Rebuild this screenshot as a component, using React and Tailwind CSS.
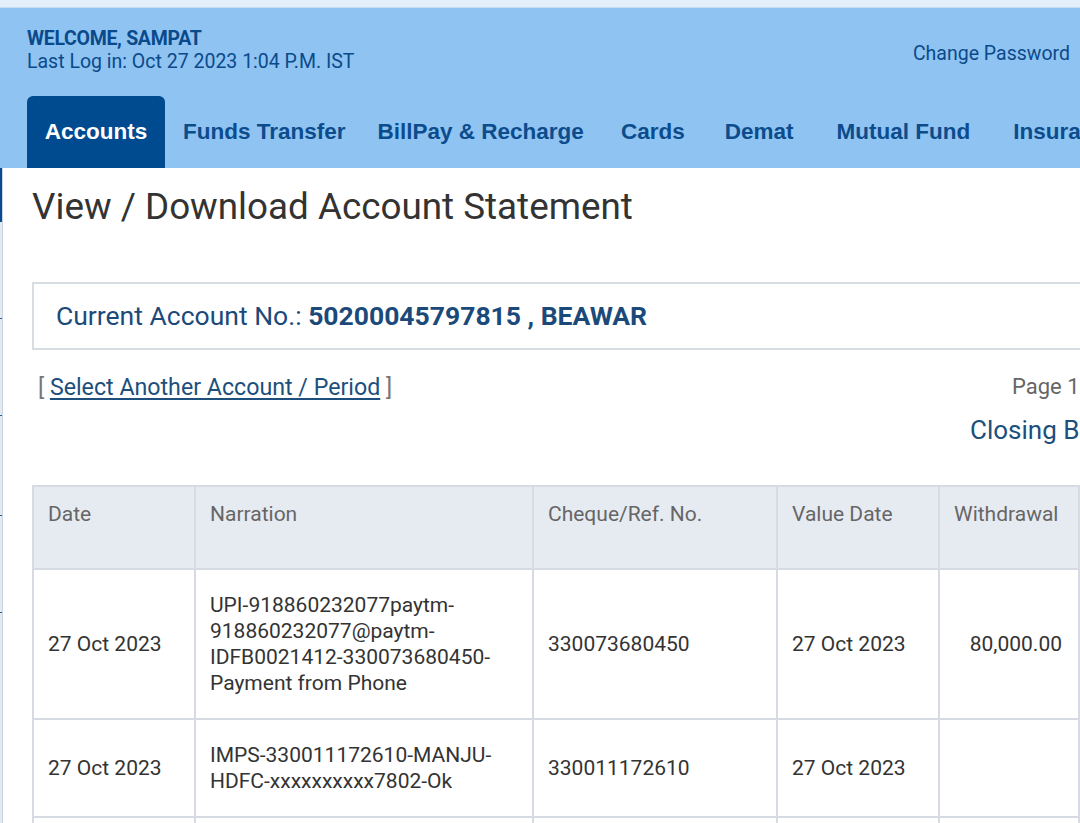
import React from 'react';

const tabs = [
  { label: 'Funds Transfer', gap: 'ml-[18px]' },
  { label: 'BillPay & Recharge', gap: 'ml-[32px]' },
  { label: 'Cards', gap: 'ml-[37px]' },
  { label: 'Demat', gap: 'ml-[40px]' },
  { label: 'Mutual Fund', gap: 'ml-[43px]' },
  { label: 'Insurance', gap: 'ml-[43px]' },
];

const rows = [
  {
    date: '27 Oct 2023',
    narration: 'UPI-918860232077paytm-918860232077@paytm-IDFB0021412-330073680450-Payment from Phone',
    ref: '330073680450',
    valueDate: '27 Oct 2023',
    withdrawal: '80,000.00',
    deposit: '',
  },
  {
    date: '27 Oct 2023',
    narration: 'IMPS-330011172610-MANJU-HDFC-xxxxxxxxxx7802-Ok',
    ref: '330011172610',
    valueDate: '27 Oct 2023',
    withdrawal: '',
    deposit: '50,000.00',
  },
  {
    date: '27 Oct 2023',
    narration: 'IMPS-330011175521-MANJU-HDFC-xxxxxxxxxx7802-Ok',
    ref: '330011175521',
    valueDate: '27 Oct 2023',
    withdrawal: '',
    deposit: '30,000.00',
  },
];

function LeftRail() {
  return (
    <div className="w-[3px] shrink-0 bg-[#e4eaf2] border-r border-[#c9d3df] flex flex-col">
      <div className="h-[54px] bg-[#0a4a8f]" />
      <div className="h-[96px]" />
      <div className="h-px bg-[#2a5d96]" />
      <div className="h-[96px]" />
      <div className="h-px bg-[#2a5d96]" />
      <div className="h-[99px]" />
      <div className="h-px bg-[#2a5d96]" />
      <div className="h-[96px]" />
      <div className="h-px bg-[#2a5d96]" />
    </div>
  );
}

export default function App() {
  return (
    <div className="w-[1080px] h-[823px] overflow-hidden bg-white font-['Roboto',sans-serif]">
      <div className="h-[8px] bg-[#e2eefa] border-b border-[#c7dcf2]" />

      <div className="bg-[#8ec3f2] h-[160px] flex flex-col">
        <div className="flex justify-between pl-[27px] pr-[10px] pt-[19px]">
          <div className="text-[#0b4a8a] leading-[23px]">
            <p className="text-[19.5px] font-bold tracking-[-0.3px]">WELCOME, SAMPAT</p>
            <p className="text-[19.5px]">Last Log in: Oct 27 2023 1:04 P.M. IST</p>
          </div>
          <a className="text-[19.5px] text-[#0b4a8a] mt-[12px] whitespace-nowrap">Change Password</a>
        </div>
        <div className="mt-auto flex items-end pl-[27px] whitespace-nowrap font-['Liberation_Sans',sans-serif] font-bold text-[22.5px]">
          <div className="h-[72px] w-[138px] shrink-0 rounded-t-[6px] bg-[#004a8f] text-white flex items-center justify-center">
            Accounts
          </div>
          {tabs.map((t) => (
            <div key={t.label} className={`h-[72px] shrink-0 flex items-center text-[#0c4c8c] ${t.gap}`}>
              {t.label}
            </div>
          ))}
        </div>
      </div>

      <div className="flex h-[655px]">
        <LeftRail />
        <div className="pl-[29px] w-[1300px] shrink-0">
          <h1 className="mt-[17px] text-[36.8px] leading-[44px] text-[#333333] whitespace-nowrap">
            View / Download Account Statement
          </h1>

          <div className="mt-[53px] h-[68px] border-2 border-[#d8dde4] flex items-center pl-[22px] text-[26.5px] text-[#1b4a7a] whitespace-nowrap">
            <span>Current Account No.:&nbsp;</span>
            <span className="font-bold">50200045797815 , BEAWAR</span>
          </div>

          <div className="flex mt-[23px] whitespace-nowrap">
            <div className="w-[938px] shrink-0 pl-[6px] text-[23.2px] leading-[28px] text-[#777777]">
              [ <a className="underline text-[#1d4f7c] underline-offset-[3px]">Select Another Account / Period</a> ]
            </div>
            <div>
              <p className="pl-[42px] text-[22px] leading-[28px] text-[#666666]">Page 1 of 1</p>
              <p className="mt-[14px] text-[26px] leading-[30px] text-[#1d4f7c]">Closing Balance : 1,22,450.00</p>
            </div>
          </div>

          <table className="mt-[40px] border-collapse text-[21px] leading-[26px] table-fixed w-[1340px]">
            <colgroup>
              <col className="w-[162px]" />
              <col className="w-[338px]" />
              <col className="w-[244px]" />
              <col className="w-[162px]" />
              <col className="w-[140px]" />
              <col className="w-[140px]" />
              <col className="w-[154px]" />
            </colgroup>
            <thead>
              <tr className="bg-[#e6ebf2] text-[#666666] h-[83px]">
                {['Date', 'Narration', 'Cheque/Ref. No.', 'Value Date', 'Withdrawal', 'Deposit', 'Closing Balance'].map((h) => (
                  <th key={h} className="border-2 border-[#d6dbe3] align-top text-left font-normal px-[14px] pt-[14px] whitespace-nowrap">
                    {h}
                  </th>
                ))}
              </tr>
            </thead>
            <tbody className="text-[#333333]">
              {rows.map((r, i) => (
                <tr key={i}>
                  <td className="border-2 border-[#d6dbe3] px-[14px] py-[22px]">{r.date}</td>
                  <td className="border-2 border-[#d6dbe3] px-[14px] py-[22px] break-words">{r.narration}</td>
                  <td className="border-2 border-[#d6dbe3] px-[14px] py-[22px]">{r.ref}</td>
                  <td className="border-2 border-[#d6dbe3] px-[14px] py-[22px]">{r.valueDate}</td>
                  <td className="border-2 border-[#d6dbe3] pl-[14px] pr-[16px] py-[22px] text-right">{r.withdrawal}</td>
                  <td className="border-2 border-[#d6dbe3] px-[14px] py-[22px] text-right">{r.deposit}</td>
                  <td className="border-2 border-[#d6dbe3] px-[14px] py-[22px] text-right">1,22,450.00</td>
                </tr>
              ))}
            </tbody>
          </table>
        </div>
      </div>
    </div>
  );
}
